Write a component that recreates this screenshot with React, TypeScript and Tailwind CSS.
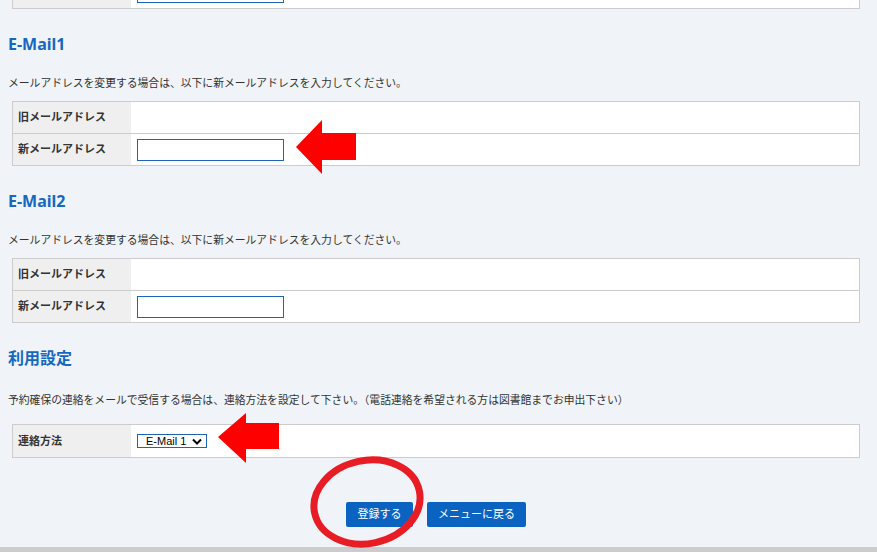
import React from "react";

const font = { fontFamily: '"Noto Sans", "Noto Sans CJK JP", sans-serif' };
const cjk = { fontFamily: '"Noto Sans CJK JP", "Noto Sans", sans-serif' };

function Label({ children }: { children: React.ReactNode }) {
  return (
    <div className="w-[118px] shrink-0 bg-[#efefef] pl-[5px] flex items-center text-[11px] font-bold text-[#333]">
      {children}
    </div>
  );
}

function Input() {
  return <div className="w-[147px] h-[22px] border border-[#1f64b6] bg-white" />;
}

function Heading({ children, mt }: { children: React.ReactNode; mt: string }) {
  return (
    <div className={`${mt} h-[21px] leading-[21px] text-[16px] font-bold text-[#1767c0]`}>
      {children}
    </div>
  );
}

function Desc({ children, mt }: { children: React.ReactNode; mt: string }) {
  return (
    <div className={`${mt} h-[16px] leading-[16px] text-[10.8px] text-[#333]`} style={cjk}>
      {children}
    </div>
  );
}

function EmailTable() {
  return (
    <div className="mt-[11px] ml-[4px] w-[848px] border border-[#cccccc] bg-white">
      <div className="flex h-[31px]">
        <Label>旧メールアドレス</Label>
        <div className="flex-1" />
      </div>
      <div className="flex h-[32px] border-t border-[#cccccc]">
        <Label>新メールアドレス</Label>
        <div className="flex-1 flex items-center pl-[6px]">
          <Input />
        </div>
      </div>
    </div>
  );
}

export default function App() {
  return (
    <div className="relative w-[877px] h-[552px] overflow-hidden bg-[#f0f3f7]" style={font}>
      <div className="px-[8px]">
        {/* tail of previous table */}
        <div className="-mt-[24px] ml-[4px] w-[848px] h-[33px] flex border border-t-0 border-[#cccccc] bg-white">
          <Label>{""}</Label>
          <div className="flex-1 flex items-center pl-[6px]">
            <Input />
          </div>
        </div>

        <Heading mt="mt-[25px]">E-Mail1</Heading>
        <Desc mt="mt-[19px]">メールアドレスを変更する場合は、以下に新メールアドレスを入力してください。</Desc>
        <EmailTable />

        <Heading mt="mt-[25px]">E-Mail2</Heading>
        <Desc mt="mt-[19px]">メールアドレスを変更する場合は、以下に新メールアドレスを入力してください。</Desc>
        <EmailTable />

        <Heading mt="mt-[25px]">利用設定</Heading>
        <Desc mt="mt-[22px]">
          予約確保の連絡をメールで受信する場合は、連絡方法を設定して下さい。（電話連絡を希望される方は図書館までお申出下さい）
        </Desc>
        <div className="mt-[17px] ml-[4px] w-[848px] border border-[#cccccc] bg-white">
          <div className="flex h-[32px]">
            <Label>連絡方法</Label>
            <div className="flex-1 flex items-center pl-[6px]">
              <div
                className="w-[70px] h-[14px] border border-[#1f64b6] bg-white flex items-center pl-[8px] pr-[4px] text-[11px] leading-none text-black"
                style={{ fontFamily: '"Liberation Sans", Arial, sans-serif' }}
              >
                <span className="flex-1">E-Mail 1</span>
                <svg width="10" height="7" viewBox="0 0 10 7">
                  <path d="M1 1.5 L5 5.5 L9 1.5" fill="none" stroke="#000" strokeWidth="2" />
                </svg>
              </div>
            </div>
          </div>
        </div>

        <div className="mt-[44px] ml-[4px] w-[848px] flex justify-center gap-[14px]">
          <button className="w-[67px] h-[25px] rounded-[2px] bg-[#0b63c1] text-white text-[11px]">登録する</button>
          <button className="w-[99px] h-[25px] rounded-[2px] bg-[#0b63c1] text-white text-[11px]">メニューに戻る</button>
        </div>
      </div>

      <div className="absolute left-0 right-0 top-[547px] h-[5px] bg-[#cccccc]" />

      <svg className="absolute left-[296px] top-[120px] w-[60px] h-[54px]" viewBox="0 0 60 54" preserveAspectRatio="none">
        <polygon points="0,27 26,0 26,13 60,13 60,40 26,40 26,54" fill="#ff0000" />
      </svg>
      <svg className="absolute left-[218px] top-[413px] w-[61px] h-[50px]" viewBox="0 0 61 50" preserveAspectRatio="none">
        <polygon points="0,24 28,0 28,10 61,10 61,36 28,36 28,50" fill="#ff0000" />
      </svg>

      <svg className="absolute left-[300px] top-[450px] w-[135px] h-[102px]" viewBox="0 0 135 102">
        <ellipse cx="67" cy="52" rx="53.5" ry="41.5" fill="none" stroke="#e81c25" strokeWidth="7" transform="rotate(-12 67 52)" />
      </svg>
    </div>
  );
}
